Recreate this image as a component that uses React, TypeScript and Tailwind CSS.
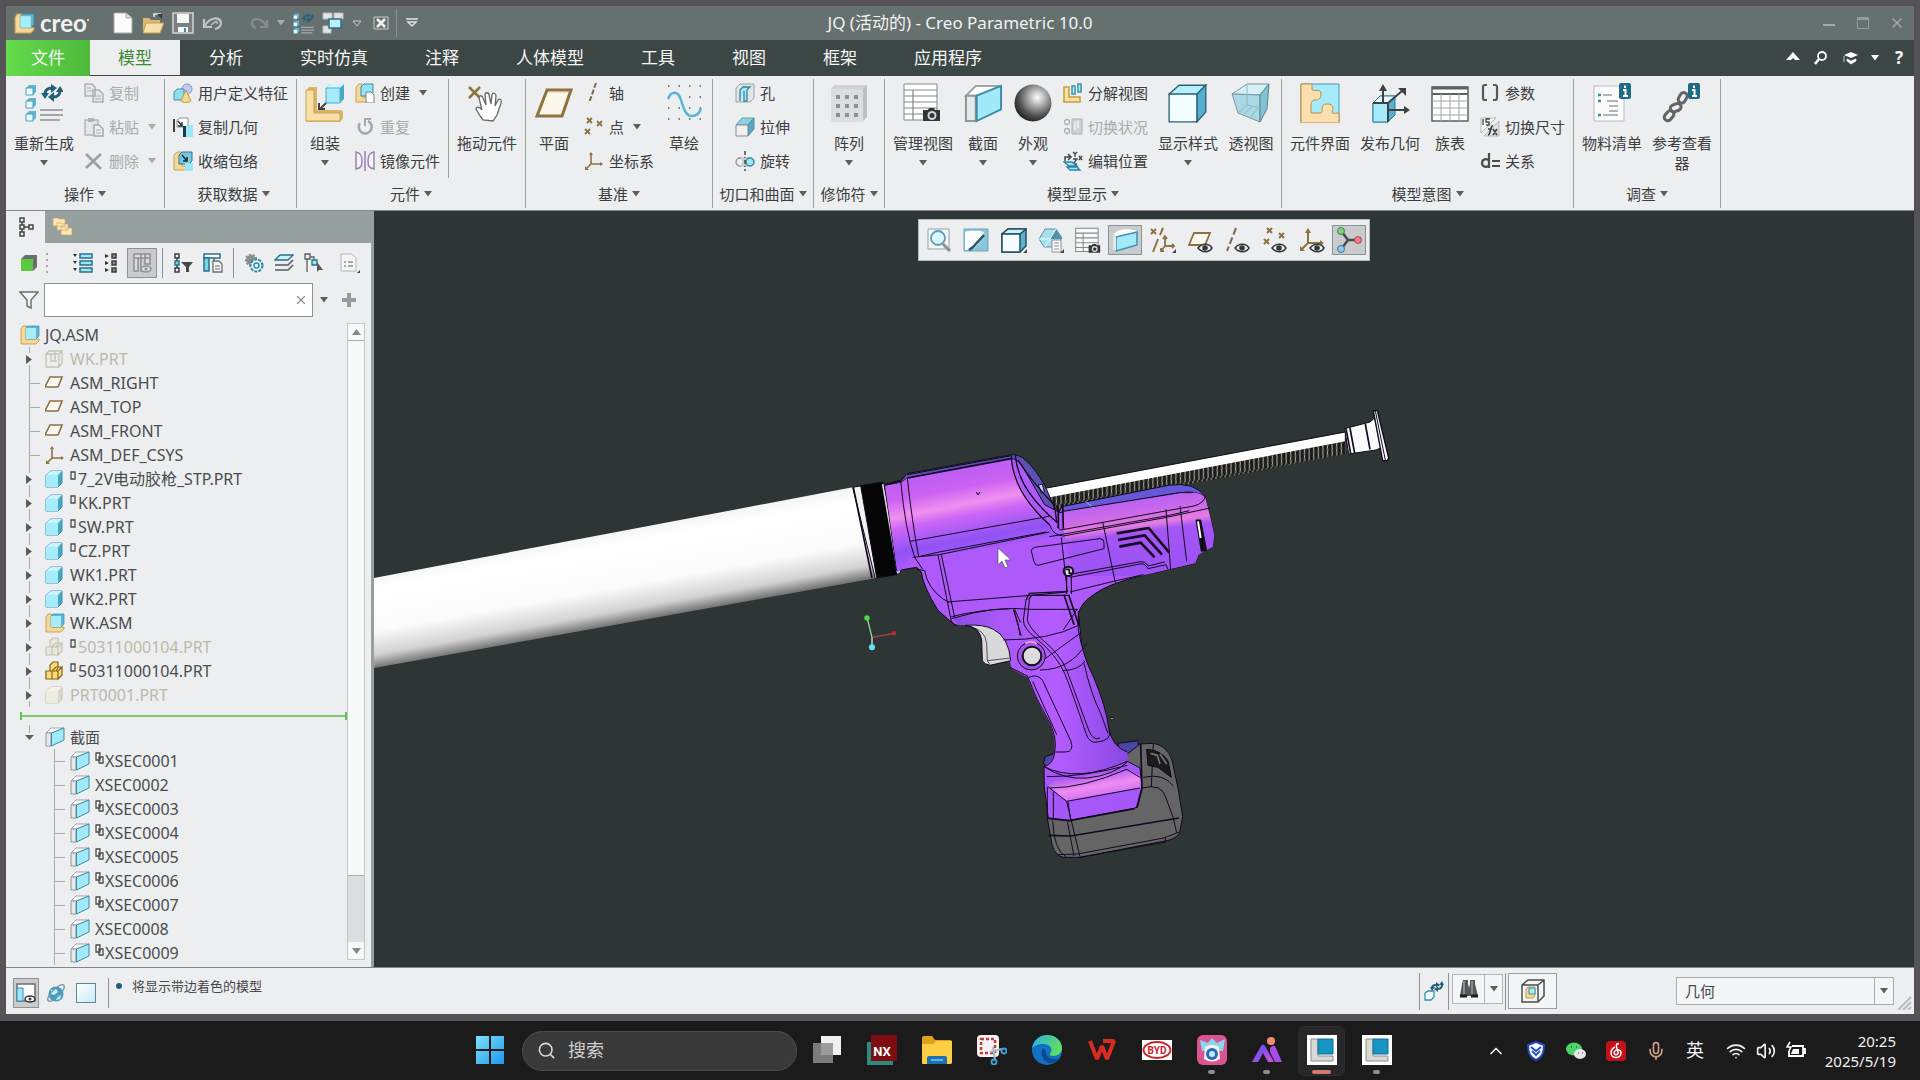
import React from 'react';
import { ChevronUp, Mic, Search, Volume2, Wifi, X } from 'lucide-react';

type IconProps = { size?: number; box?: number; children: React.ReactNode };

const Icon = ({ size = 20, box = 20, children }: IconProps) => (
  <svg width={size} height={size} viewBox={`0 0 ${box} ${box}`} fill="none" className="shrink-0" aria-hidden="true">
    {children}
  </svg>
);

const Caret = ({ light = false }: { light?: boolean }) => (
  <svg width="8" height="6" viewBox="0 0 8 6" className={light ? 'shrink-0 fill-[#a9abac]' : 'shrink-0 fill-[#5b5d5e]'} aria-hidden="true">
    <path d="M0 0h8L4 5.5z" />
  </svg>
);

/* ---------- shared small drawings ---------- */

const AsmIcon = ({ size = 20 }: { size?: number }) => (
  <Icon size={size}>
    <path d="M1 4l2-3h4v13h12v2l-3 3H1z" fill="#f5d894" stroke="#c7a35b" />
    <path d="M6 3l2-2h11v10l-3 3H6z" fill="#5fb6d3" stroke="#3a8dab" strokeWidth=".7" />
    <path d="M6 3h10v11H6z" fill="#a9edfb" />
  </Icon>
);

const PartIcon = ({ ghost = false }: { ghost?: boolean }) => (
  <Icon>
    <path d="M1 6l5-4h11v12l-4 4H1z" fill={ghost ? '#dbd8cb' : '#4aa5c6'} stroke={ghost ? '#c9c5b4' : '#3f8fab'} />
    <path d="M1 6l5-4h11l-4 4z" fill={ghost ? '#f2f0e8' : '#c9f5fd'} />
    <path d="M1 6h12v12H1z" fill={ghost ? '#eeebdf' : '#a6edfc'} />
  </Icon>
);

const GhostFrameIcon = () => (
  <Icon>
    <path d="M1 5l3-3h13v12l-3 4H1zM1 5h13v13M14 5l3-3M6 6v6h6M10 3v8" stroke="#c6c2b2" strokeWidth="1.3" />
  </Icon>
);

const PlaneIcon = () => (
  <Icon>
    <path d="M5 4h12l-4 10H0z" fill="#faf7ee" stroke="#897245" strokeWidth="1.600" />
  </Icon>
);

const CsysIcon = () => (
  <Icon>
    <path d="M7 2v11h11M7 13l-5 5" stroke="#8d7340" strokeWidth="1.600" />
    <path d="M5 4l2-3 2 3zM16 11l3 2-3 2zM1 15v4h4z" fill="#8d7340" />
  </Icon>
);

const BlocksIcon = ({ ghost = false }: { ghost?: boolean }) => (
  <Icon>
    <g fill={ghost ? '#eae7dc' : '#fbdc7c'} stroke={ghost ? '#c6c2b2' : '#8a6212'} strokeWidth="1.200">
      <path d="M5 4l3-3h5v6l-2 3H5zM1 10h6v8H1zM7 10h6v8H7zM13 10l4-4v8l-4 4zM7 10l4-4h6" />
    </g>
  </Icon>
);

const SectionIcon = ({ size = 20 }: { size?: number }) => (
  <Icon size={size}>
    <path d="M1 6l5-5h13L7 6z" fill="#fff" stroke="#9fa5a8" />
    <path d="M1 6h5v13H1z" fill="#e6e8ea" stroke="#8f979b" />
    <path d="M6.500 6L19 1v12L6.500 19z" fill="#a2eafa" stroke="#3d8ba5" />
  </Icon>
);

const CubeIcon = ({ size = 36 }: { size?: number }) => (
  <Icon size={size} box={36}>
    <path d="M1 10l9-8h24l-8 8z" fill="#b5effb" stroke="#2a6076" strokeWidth="1.200" />
    <path d="M26 10l8-8v24l-8 9z" fill="#55b0cf" stroke="#2a6076" strokeWidth="1.200" />
    <path d="M1 10h25v25H1z" fill="#f4fdff" stroke="#2a6076" strokeWidth="1.200" />
  </Icon>
);

const RegenIcon = ({ size = 38 }: { size?: number }) => (
  <Icon size={size} box={38}>
    {[1, 14, 27].map((y) => (
      <g key={y}>
        <path d={`M1 ${y + 3}l3-3h7v7l-3 3H1z`} fill="#5db5d2" />
        <path d={`M1 ${y + 3}h7v7H1z`} fill="#eefbfe" stroke="#4ba0bd" />
      </g>
    ))}
    <path d="M15 26h23M15 31h23M15 36h20" stroke="#a4a7a8" strokeWidth="2" />
    <path d="M20 10c0-4 3-6 7-6M35 6c0 5-2 7-7 7" stroke="#226079" strokeWidth="3" />
    <path d="M26 0l6 4-6 5zM29 8l-6 5 6 5zM16 9h8l-4 6zM31 8l4-6 4 6z" fill="#226079" />
  </Icon>
);

const CameraGlyph = () => (
  <g>
    <path d="M20 27h5l1-2h5l1 2h5v11H20z" fill="#33373a" />
    <circle cx="29" cy="32.500" r="4.500" fill="#d4d6d8" />
    <circle cx="29" cy="32.500" r="2.500" fill="#33373a" />
  </g>
);

const SheetIcon = ({ size = 40 }: { size?: number }) => (
  <Icon size={size} box={40}>
    <path d="M1 1h33v36H1z" fill="#fff" stroke="#83888b" />
    <path d="M1 7h33M1 13h33M1 19h33M1 25h33M1 31h33M10 7v30" stroke="#83888b" strokeWidth="1.200" />
    <CameraGlyph />
  </Icon>
);

const InfoBadge = ({ x }: { x: number }) => (
  <g>
    <rect x={x} y="0" width="12" height="16" rx="2" fill="#1f6a86" />
    <path d={`M${x + 6} 2.500v2.500M${x + 4} 7h2.500v5.500M${x + 4} 13h5`} stroke="#fff" strokeWidth="2" />
  </g>
);

/* ---------- ribbon ---------- */

type SmallProps = { icon: React.ReactNode; label: string; disabled?: boolean; caret?: boolean };

const SmallButton = ({ icon, label, disabled = false, caret = false }: SmallProps) => (
  <button
    type="button"
    disabled={disabled}
    className={`flex h-[34px] items-center gap-[5px] whitespace-nowrap ${disabled ? 'text-[#a9abac]' : 'text-[#3b3d3e]'}`}
  >
    {icon}
    <span>{label}</span>
    {caret && (
      <span className="ml-1">
        <Caret light={disabled} />
      </span>
    )}
  </button>
);

type BigProps = { icon: React.ReactNode; label: string; width: string; caret?: boolean };

const BigButton = ({ icon, label, width, caret = false }: BigProps) => (
  <button type="button" className={`flex shrink-0 flex-col items-center text-[#3b3d3e] ${width}`}>
    <span className="flex h-12 items-center justify-center">{icon}</span>
    <span className="mt-[6px] px-px leading-5">{label}</span>
    {caret && (
      <span className="mt-[2px] flex h-4 items-center">
        <Caret />
      </span>
    )}
  </button>
);

const Column = ({ children }: { children: React.ReactNode }) => <div className="-mt-[3px] flex flex-col px-[2px]">{children}</div>;

const Group = ({ label, width, children }: { label: string; width: string; children: React.ReactNode }) => (
  <section aria-label={label} className={`flex shrink-0 flex-col border-r border-[#9aa3a4] ${width}`}>
    <div className="flex h-[102px]">{children}</div>
    <button type="button" className="flex h-7 items-center justify-center gap-1 whitespace-nowrap text-[#3b3d3e]">
      {label}
      <Caret />
    </button>
  </section>
);

const Ribbon = () => (
  <div className="flex h-[135px] shrink-0 overflow-hidden border-b border-[#7e8a8a] bg-[#eceef0] pt-[3px] pb-[2px] text-[15px]">
    <Group label="操作" width="w-[159px]">
      <BigButton label="重新生成" width="w-[76px]" caret icon={<RegenIcon />} />
      <Column>
        <SmallButton
          disabled
          label="复制"
          icon={
            <Icon>
              <path d="M1 1h7l3 3v9H1zM9 7h6l4 4v8H9z" fill="#e6e7e8" stroke="#adb0b1" strokeWidth="1.500" />
              <path d="M3 5h4M3 8h5M11 13h6M11 16h6" stroke="#adb0b1" />
            </Icon>
          }
        />
        <SmallButton
          disabled
          caret
          label="粘贴"
          icon={
            <Icon>
              <path d="M1 3h13v15H1z" fill="#e6e7e8" stroke="#b3b6b7" strokeWidth="1.500" />
              <path d="M4 1h6v4H4z" fill="#b3b6b7" />
              <path d="M10 8h5l4 4v7h-9z" fill="#eff0f1" stroke="#a5a8a9" strokeWidth="1.500" />
              <path d="M12 13h5M12 16h5" stroke="#a5a8a9" />
            </Icon>
          }
        />
        <SmallButton
          disabled
          caret
          label="删除"
          icon={
            <Icon>
              <path d="M2 3l15 15M17 3L2 17" stroke="#9c9fa0" strokeWidth="2.500" />
            </Icon>
          }
        />
      </Column>
    </Group>

    <Group label="获取数据" width="w-[132px] pl-[6px]">
      <Column>
        <SmallButton
          label="用户定义特征"
          icon={
            <Icon>
              <circle cx="14" cy="6" r="5" fill="#c3c9ec" stroke="#8a93c4" />
              <path d="M1 9l3-3h7v8l-3 3H1z" fill="#93dcef" stroke="#4293b2" />
              <path d="M13 7l5 11c-2 2-8 2-10 0z" fill="#f6d793" stroke="#c29b4a" />
            </Icon>
          }
        />
        <SmallButton
          label="复制几何"
          icon={
            <Icon>
              <path d="M1 2v13" stroke="#3a4043" strokeWidth="2" />
              <path d="M4 3l3-2h8v7l-3 2H4z" fill="#fff" stroke="#8c9194" />
              <path d="M5 4l4 5M9 5v4H5" stroke="#333" strokeWidth="1.500" />
              <path d="M10 9h3v11h-3z" fill="#173b4b" />
              <path d="M13 8h7v12h-7z" fill="#9be7f8" />
            </Icon>
          }
        />
        <SmallButton
          label="收缩包络"
          icon={
            <Icon>
              <path d="M1 4l3-3h5v14h8v1l-3 3H1z" fill="#f5d894" stroke="#c7a35b" />
              <path d="M6 4l3-3h10v9l-3 3H6z" fill="#7cc7de" stroke="#2c7390" />
              <path d="M9 4l5 6M14 6v4h-4" stroke="#12303d" strokeWidth="1.500" />
              <path d="M12 12h8v8h-8z" fill="#9be7f8" />
            </Icon>
          }
        />
      </Column>
    </Group>

    <Group label="元件" width="w-[229px]">
      <BigButton
        label="组装"
        width="w-[56px]"
        caret
        icon={
          <Icon size={40} box={40}>
            <path d="M1 7l3-3h8v23h23l3 1v7l-3 4H1z" fill="#d9b565" />
            <path d="M1 7h8v23h26v8H1z" fill="#fae0a8" stroke="#c7a35b" />
            <path d="M21 5l4-4h14v15l-4 4H21z" fill="#4aa6c6" />
            <path d="M21 5l4-4h14l-4 4z" fill="#d2f6fd" />
            <path d="M21 5h14v15H21z" fill="#a4ebfb" stroke="#52aac6" />
            <path d="M21 20l-6 6M14 20v6h6" stroke="#444" strokeWidth="2" />
          </Icon>
        }
      />
      <Column>
        <SmallButton
          caret
          label="创建"
          icon={
            <Icon>
              <path d="M1 4l3-3h3v13h11v2l-3 3H1z" fill="#f5d894" stroke="#c7a35b" />
              <path d="M6 4l3-3h9v9l-3 3H6z" fill="#97e2f4" stroke="#3a8dab" />
              <path d="M11 9h5l3 3v8h-8z" fill="#fff" stroke="#7b8082" />
            </Icon>
          }
        />
        <SmallButton
          disabled
          label="重复"
          icon={
            <Icon>
              <path d="M5 6a6.500 6.500 0 1 0 8-2" stroke="#a5a8a9" strokeWidth="2.500" />
              <path d="M10 9V2h6" stroke="#a5a8a9" strokeWidth="2" />
            </Icon>
          }
        />
        <SmallButton
          label="镜像元件"
          icon={
            <Icon>
              <path d="M10 0v20" stroke="#a678b8" strokeWidth="1.500" />
              <path d="M1 1c5 1 6 4 6 9s-1 7-6 8z" fill="#f7f1fa" stroke="#9a86a8" strokeWidth="1.500" />
              <path d="M19 1c-5 1-6 4-6 9s1 7 6 8z" fill="#f7f1fa" stroke="#9a86a8" strokeWidth="1.500" />
            </Icon>
          }
        />
      </Column>
      <div className="ml-[6px] h-[99px] border-l border-[#9aa3a4]" />
      <BigButton
        label="拖动元件"
        width="w-[76px]"
        icon={
          <Icon size={38} box={38}>
            <path d="M1 3l11 11M12 3L1 14" stroke="#8d7340" strokeWidth="2.500" />
            <path
              d="M15 36c-3-4-6-9-7-11 0-3 4-2 6 1l-3-12c0-3 3-3 4 0l3 7-1-10c0-3 4-3 4 0l2 9 1-9c1-3 4-2 4 1l-1 10 3-6c2-2 4 0 3 3l-4 12-4 6z"
              fill="#fff"
              stroke="#66696b"
              strokeWidth="1.300"
            />
          </Icon>
        }
      />
    </Group>

    <Group label="基准" width="w-[187px]">
      <BigButton
        label="平面"
        width="w-[56px]"
        icon={
          <Icon size={38} box={38}>
            <path d="M12 6h24l-9 26H2z" fill="#faf6ea" stroke="#8d7340" strokeWidth="3" />
            <path d="M13 8h20" stroke="#d6c391" />
          </Icon>
        }
      />
      <Column>
        <SmallButton
          label="轴"
          icon={
            <Icon>
              <path d="M12 0L5 20" stroke="#776946" strokeWidth="2" strokeDasharray="5 2" />
            </Icon>
          }
        />
        <SmallButton
          caret
          label="点"
          icon={
            <Icon>
              <path d="M3 1l5 5M8 1L3 6M13 4l5 5M18 4l-5 5M1 12l5 5M6 12l-5 5" stroke="#8d7340" strokeWidth="1.800" />
            </Icon>
          }
        />
        <SmallButton label="坐标系" icon={<CsysIcon />} />
      </Column>
      <BigButton
        label="草绘"
        width="w-[56px]"
        icon={
          <Icon size={36} box={36}>
            {[2, 13, 24, 35].map((y) => (
              <path key={y} d={`M2 ${y - 1}h34`} stroke="#5a5d5f" strokeWidth="1.500" strokeDasharray="1.500 9" />
            ))}
            <path d="M2 14c3-8 10-9 13 1s5 16 11 16 8-4 9-8" stroke="#55b5d3" strokeWidth="2.500" />
          </Icon>
        }
      />
    </Group>

    <Group label="切口和曲面" width="w-[101px]">
      <div className="pl-5">
        <Column>
          <SmallButton
            label="孔"
            icon={
              <Icon>
                <path d="M1 5l4-4h14v14l-4 4H1z" fill="#e3e5e7" stroke="#9da2a5" />
                <path d="M5 18V7l3-3h7l-3 3v11H9V8" fill="#a6ebfa" stroke="#2b86a5" strokeWidth="1.300" />
              </Icon>
            }
          />
          <SmallButton
            label="拉伸"
            icon={
              <Icon>
                <path d="M1 8l6-7h12l-6 7z" fill="#8fd0e2" stroke="#6b9cac" />
                <path d="M13 8l6-7v11l-6 7z" fill="#5baac3" stroke="#4a8ba1" />
                <path d="M1 8h12v11H1z" fill="#eef0f1" stroke="#868d90" />
              </Icon>
            }
          />
          <SmallButton
            label="旋转"
            icon={
              <Icon>
                <circle cx="5" cy="11" r="4" fill="#eef0f1" stroke="#8d9396" strokeWidth="1.300" />
                <path d="M5 7c4-1 7-1 10 0v8c-3 1-6 1-10 0 3-2 3-6 0-8z" fill="#c9cdd0" />
                <circle cx="15" cy="11" r="4" fill="#9fe6f7" stroke="#2b86a5" strokeWidth="1.500" />
                <path d="M10 0v20" stroke="#333" strokeWidth="1.300" strokeDasharray="4 2 1 2" />
              </Icon>
            }
          />
        </Column>
      </div>
    </Group>

    <Group label="修饰符" width="w-[71px]">
      <BigButton
        label="阵列"
        width="w-[70px]"
        caret
        icon={
          <Icon size={38} box={38}>
            <path d="M1 5l4-4h32v32l-4 4H1z" fill="#bcbec0" />
            <path d="M1 5l4-4h32l-4 4z" fill="#cfd1d2" />
            <path d="M1 5h32v33H1z" fill="#dcdddf" />
            {[11, 20, 29].map((y) => (
              <g key={y} fill="#8d9092">
                <rect x="6" y={y} width="4" height="4" />
                <rect x="15" y={y} width="4" height="4" />
                <rect x="24" y={y} width="4" height="4" />
              </g>
            ))}
          </Icon>
        }
      />
    </Group>

    <Group label="模型显示" width="w-[397px]">
      <BigButton label="管理视图" width="w-[76px]" caret icon={<SheetIcon />} />
      <BigButton label="截面" width="w-[44px]" caret icon={<SectionIcon size={39} />} />
      <BigButton
        label="外观"
        width="w-[56px]"
        caret
        icon={
          <Icon size={38} box={38}>
            <defs>
              <radialGradient id="ball" cx=".62" cy=".35" r=".7">
                <stop offset="0" stopColor="#fff" />
                <stop offset=".35" stopColor="#a9a9a9" />
                <stop offset=".7" stopColor="#545454" />
                <stop offset="1" stopColor="#1f1f1f" />
              </radialGradient>
            </defs>
            <circle cx="19" cy="19" r="18.500" fill="url(#ball)" />
          </Icon>
        }
      />
      <Column>
        <SmallButton
          label="分解视图"
          icon={
            <Icon>
              <path d="M1 4h5v10h11v5H1z" fill="#fae0a8" stroke="#c99b3c" strokeWidth="1.500" />
              <path d="M9 3h3v8H9zM15 1h3v8h-3z" fill="#b8effb" stroke="#3d93b0" strokeWidth="1.500" />
            </Icon>
          }
        />
        <SmallButton
          disabled
          label="切换状况"
          icon={
            <Icon>
              <circle cx="4" cy="5" r="2.500" stroke="#adb0b1" strokeWidth="1.300" />
              <circle cx="4" cy="14" r="2.500" stroke="#adb0b1" strokeWidth="1.300" />
              <path d="M9 2h10v15H9z" fill="#d0d2d3" stroke="#adb0b1" />
              <path d="M12 5v8M15 4v7" stroke="#f4f4f4" strokeWidth="1.500" />
            </Icon>
          }
        />
        <SmallButton
          label="编辑位置"
          icon={
            <Icon>
              <path d="M2 10V6h5M5 3l3 3-3 3" stroke="#444" strokeWidth="1.500" />
              <path d="M10 1l2 2 2-2M12 3v3M16 5l3 4M19 5l-3 4M10 8h4l-4 5h4" stroke="#444" strokeWidth="1.300" />
              <path d="M1 11h8l5 4H6zM4 16h10l3 3H7z" fill="#9fe6f7" stroke="#2b86a5" strokeWidth="1.300" />
            </Icon>
          }
        />
      </Column>
      <BigButton label="显示样式" width="w-[76px]" caret icon={<CubeIcon size={40} />} />
      <BigButton
        label="透视图"
        width="w-[50px]"
        icon={
          <Icon size={40} box={40}>
            <path d="M1 11L16 1h22L29 12z" fill="#d5f1f7" stroke="#7d979f" />
            <path d="M1 11l28 1v27L7 30z" fill="#a8d9e5" stroke="#7d979f" />
            <path d="M29 12l9-11-2 25-7 13z" fill="#7fc4d6" stroke="#5d818b" />
            <path d="M16 1v21l20 4M16 22L7 30M12 32l10-9M19 35l8-10" stroke="#8fb5bf" />
          </Icon>
        }
      />
    </Group>

    <Group label="模型意图" width="w-[292px]">
      <BigButton
        label="元件界面"
        width="w-[76px]"
        icon={
          <Icon size={40} box={40}>
            <path d="M1 1h38v38H1z" fill="#a6ebfa" stroke="#4c9bb5" />
            <path
              d="M1 1h11v5c0 4 9-2 9 5 0 6-4 6-7 6-3 1-3 4-3 6v7h10c3-1-2-9 6-9s6 5 5 8c0 2 4 1 7 1v10H1z"
              fill="#fbdfae"
              stroke="#b98f45"
            />
          </Icon>
        }
      />
      <BigButton
        label="发布几何"
        width="w-[64px]"
        icon={
          <Icon size={40} box={40}>
            <path d="M3 20l7-7h15v19l-7 7H3z" fill="#57b1cf" stroke="#2b7f9c" />
            <path d="M3 20h15v19H3z" fill="#a6ebfa" stroke="#2b7f9c" />
            <path d="M3 20l7-7h15l-7 7z" fill="#e6fafe" stroke="#2b7f9c" />
            <path d="M3 20h15M13 20V5M18 27h18M18 20L32 8M18 20v19" stroke="#3e4244" strokeWidth="2" />
            <path d="M9 8l4-7 4 7zM34 23l6 4-6 4zM28 5h8v8z" fill="#3e4244" />
          </Icon>
        }
      />
      <BigButton
        label="族表"
        width="w-[56px]"
        icon={
          <Icon size={38} box={38}>
            <path d="M1 3h36v34H1z" fill="#fff" stroke="#5e6264" strokeWidth="1.500" />
            <path d="M1 4h36" stroke="#5e6264" strokeWidth="3" />
            <path d="M1 10h36" stroke="#5e6264" strokeWidth="2" />
            <path d="M1 17h36M1 24h36M1 31h36M10 10v27M19 10v27M28 10v27" stroke="#a2a5a7" />
          </Icon>
        }
      />
      <Column>
        <SmallButton
          label="参数"
          icon={
            <Icon>
              <path d="M7 2H5Q3 2 3 4v11q0 2 2 2h2M13 2h2q2 0 2 2v11q0 2-2 2h-2" stroke="#55585a" strokeWidth="2.200" />
            </Icon>
          }
        />
        <SmallButton
          label="切换尺寸"
          icon={
            <Icon>
              <path d="M1 1h15L1 16z" fill="#fafafa" stroke="#b5b8ba" />
              <path d="M19 4v15H4z" fill="#dfe1e2" stroke="#b5b8ba" />
              <path d="M3 2v6M10 2H6v3h3v3H6" stroke="#3e4244" strokeWidth="1.300" />
              <path d="M13 9c-3-1-2 9-5 9M8 12h4M13 12l4 6M17 12l-4 6" stroke="#3e4244" strokeWidth="1.600" />
            </Icon>
          }
        />
        <SmallButton
          label="关系"
          icon={
            <Icon>
              <path d="M9 2v15M9 10c-2-3-7-2-7 2s5 5 7 2M12 10h8M12 15h8" stroke="#4a4d4f" strokeWidth="2.200" />
            </Icon>
          }
        />
      </Column>
    </Group>

    <Group label="调查" width="w-[147px]">
      <BigButton
        label="物料清单"
        width="w-[76px]"
        icon={
          <Icon size={40} box={40}>
            <path d="M2 3h24l6 6v29H2z" fill="#fbfbfc" stroke="#b6babc" />
            <path d="M11 12h9M15 18h11M17 23h9M17 28h9M11 32h15" stroke="#9b9fa1" strokeWidth="1.500" />
            <path d="M6 12h3M6 18h3M6 32h3" stroke="#2d9a8a" strokeWidth="2.500" />
            <InfoBadge x={27} />
          </Icon>
        }
      />
      <BigButton
        label="参考查看器"
        width="w-[64px]"
        icon={
          <Icon size={40} box={40}>
            <g stroke="#626568" strokeWidth="3">
              <rect x="1" y="29" width="11" height="7" rx="3.500" transform="rotate(-50 7 32)" />
              <rect x="8" y="21" width="11" height="7" rx="3.500" transform="rotate(-20 14 24)" />
              <rect x="15" y="12" width="11" height="7" rx="3.500" transform="rotate(-60 20 15)" />
            </g>
            <InfoBadge x={26} />
          </Icon>
        }
      />
    </Group>
  </div>
);

/* ---------- title bar and tabs ---------- */

const QuickButton = ({ label, children, width = 'w-[30px]' }: { label: string; children: React.ReactNode; width?: string }) => (
  <button type="button" aria-label={label} className={`flex h-full shrink-0 items-center justify-center ${width}`}>
    {children}
  </button>
);

const TitleBar = () => (
  <header className="grid h-[34px] shrink-0 grid-cols-[1fr_auto_1fr] items-center bg-[#66706e] text-[#f1f3f3]">
    <div className="flex h-full items-center pl-2">
      <AsmIcon size={21} />
      <span className="ml-[5px] flex w-[68px] font-['Lato','Open_Sans',sans-serif] text-[24px] leading-6 font-bold">
        creo
        <span className="mt-2 h-[2px] w-[2px] rounded-full bg-[#f1f3f3]" />
      </span>
      <QuickButton label="新建">
        <Icon size={22} box={22}>
          <path d="M2 1h12l6 5v15H2z" fill="#fcfcfc" stroke="#a9adad" />
          <path d="M14 1v5h6" fill="#d6d8d8" stroke="#a9adad" />
        </Icon>
      </QuickButton>
      <QuickButton label="打开">
        <Icon size={22} box={22}>
          <path d="M1 20V6h6l2 2h9v12z" fill="#d9b972" />
          <path d="M4 11h18l-4 10H1z" fill="#f8dfa9" stroke="#c39d53" />
          <path d="M12 5V2h7" stroke="#e9ebeb" strokeWidth="1.500" />
          <path d="M15 2h5v5z" fill="#33383a" />
        </Icon>
      </QuickButton>
      <QuickButton label="保存">
        <Icon size={22} box={22}>
          <path d="M1 1h20v20H1z" fill="#7b8080" stroke="#d2d5d5" strokeWidth="1.500" />
          <path d="M5 2h12v9H5z" fill="#f5f6f6" />
          <path d="M6 15h10v5H6z" fill="#f5f6f6" />
          <path d="M12 16h2v4h-2z" fill="#3a8dab" />
        </Icon>
      </QuickButton>
      <QuickButton label="撤消">
        <Icon size={22} box={22}>
          <path d="M2 7v8h8M3 14C7 5 19 4 19 11c0 3-2 5-6 6" stroke="#c0c6c5" strokeWidth="2.200" />
          <path d="M9 13l4-3c2-1 3 0 2 2" stroke="#c0c6c5" strokeWidth="1.500" />
        </Icon>
      </QuickButton>
      <span className="w-[16px]" />
      <QuickButton label="重做">
        <Icon size={20} box={20}>
          <path d="M18 7v7h-7M17 13C14 5 3 4 3 10c0 3 1 4 4 5" stroke="#868e8c" strokeWidth="2.200" />
        </Icon>
      </QuickButton>
      <QuickButton label="重做列表" width="w-[14px]">
        <svg width="8" height="6" viewBox="0 0 8 6" className="fill-[#a7adac]"><path d="M0 0h8L4 5.500z" /></svg>
      </QuickButton>
      <QuickButton label="重新生成">
        <RegenIcon size={21} />
      </QuickButton>
      <QuickButton label="窗口">
        <Icon size={22} box={22}>
          <path d="M1 1h9v6H1zM12 1h9v6h-9zM1 14h8v7H1z" fill="#dfe3e3" stroke="#b8bebd" />
          <path d="M7 7h12v9H7z" fill="#bceffa" stroke="#2f6f86" strokeWidth="1.500" />
        </Icon>
      </QuickButton>
      <QuickButton label="窗口列表" width="w-[18px]">
        <svg width="10" height="7" viewBox="0 0 10 7" fill="none" stroke="#c8cdcc"><path d="M1 1h8L5 6z" /></svg>
      </QuickButton>
      <QuickButton label="关闭窗口">
        <Icon size={16} box={16}>
          <path d="M1 2h14v12H1z" stroke="#c8cdcc" />
          <path d="M4 4l8 8M12 4l-8 8" stroke="#f1f3f3" strokeWidth="2.500" />
        </Icon>
      </QuickButton>
      <span className="h-7 border-l border-[#8b9391]" />
      <QuickButton label="自定义">
        <svg width="12" height="10" viewBox="0 0 12 10" fill="none" stroke="#dfe3e2" strokeWidth="1.500"><path d="M0 1h12M2 4h8L6 8z" /></svg>
      </QuickButton>
    </div>
    <h1 className="text-[17px] whitespace-nowrap">JQ (活动的) - Creo Parametric 10.0</h1>
    <div className="flex h-full items-center justify-end">
      <QuickButton label="最小化" width="w-[34px]">
        <span className="mt-1 h-[2px] w-3 bg-[#a3aaa8]" />
      </QuickButton>
      <QuickButton label="最大化" width="w-[34px]">
        <span className="h-3 w-3 border border-t-[3px] border-[#949c9a]" />
      </QuickButton>
      <QuickButton label="关闭" width="w-[34px]">
        <X size={16} color="#a3aaa8" strokeWidth={2.500} />
      </QuickButton>
    </div>
  </header>
);

const tabs = ['分析', '实时仿真', '注释', '人体模型', '工具', '视图', '框架', '应用程序'];

const Tabs = () => (
  <nav className="flex h-9 shrink-0 items-stretch bg-[#3c4645] text-[17px] text-[#f5f7f7]">
    <button type="button" className="bg-gradient-to-r from-[#64dc4c] to-[#4fb83b] px-[25px]">文件</button>
    <button type="button" className="mr-px border-b border-[#3c4645] bg-[#eceef0] px-7 text-[#3f8a34]">模型</button>
    {tabs.map((tab) => (
      <button key={tab} type="button" className="mr-px px-7">{tab}</button>
    ))}
    <div className="ml-auto flex items-center">
      <QuickButton label="折叠功能区" width="w-[26px]">
        <svg width="14" height="9" viewBox="0 0 14 9" fill="#fff" className="mb-1"><path d="M0 8l7-8 7 8H9L7 6 5 8z" /></svg>
      </QuickButton>
      <QuickButton label="搜索">
        <Icon size={14} box={14}>
          <circle cx="8" cy="5" r="4" stroke="#fff" strokeWidth="1.800" />
          <path d="M5 8l-4 5" stroke="#fff" strokeWidth="2.500" />
        </Icon>
      </QuickButton>
      <QuickButton label="学习">
        <Icon size={16} box={16}>
          <path d="M8 2l7 3-7 3-7-3z" fill="#fff" />
          <path d="M1 6v6M4 9l4 2 5-2v2l-5 3-4-3z" fill="#fff" stroke="#fff" strokeWidth=".7" />
        </Icon>
      </QuickButton>
      <QuickButton label="学习列表" width="w-[18px]">
        <svg width="8" height="6" viewBox="0 0 8 6" fill="#fff"><path d="M0 0h8L4 5.500z" /></svg>
      </QuickButton>
      <QuickButton label="帮助">
        <span className="text-[17px] font-bold">?</span>
      </QuickButton>
    </div>
  </nav>
);

/* ---------- model tree ---------- */

type Mark = 'flex' | 'link';
type Node = { name: string; icon: React.ReactNode; leaf?: boolean; ghost?: boolean; mark?: Mark };

const nodes: Node[] = [
  { name: 'WK.PRT', icon: <GhostFrameIcon />, ghost: true },
  { name: 'ASM_RIGHT', icon: <PlaneIcon />, leaf: true },
  { name: 'ASM_TOP', icon: <PlaneIcon />, leaf: true },
  { name: 'ASM_FRONT', icon: <PlaneIcon />, leaf: true },
  { name: 'ASM_DEF_CSYS', icon: <CsysIcon />, leaf: true },
  { name: '7_2V电动胶枪_STP.PRT', icon: <PartIcon />, mark: 'flex' },
  { name: 'KK.PRT', icon: <PartIcon />, mark: 'flex' },
  { name: 'SW.PRT', icon: <PartIcon />, mark: 'flex' },
  { name: 'CZ.PRT', icon: <PartIcon />, mark: 'flex' },
  { name: 'WK1.PRT', icon: <PartIcon /> },
  { name: 'WK2.PRT', icon: <PartIcon /> },
  { name: 'WK.ASM', icon: <AsmIcon /> },
  { name: '50311000104.PRT', icon: <BlocksIcon ghost />, ghost: true, mark: 'flex' },
  { name: '50311000104.PRT', icon: <BlocksIcon />, mark: 'flex' },
  { name: 'PRT0001.PRT', icon: <PartIcon ghost />, ghost: true },
];

const sections = [1, 2, 3, 4, 5, 6, 7, 8, 9].map((n) => ({
  name: `XSEC000${n}`,
  mark: n === 2 || n === 8 ? undefined : ('link' as Mark),
}));

const NodeMark = ({ mark }: { mark?: Mark }) => {
  if (mark === 'flex') {
    return (
      <svg width="8" height="20" viewBox="0 0 8 20" fill="none" stroke="#4a4d4f" strokeWidth="1.300" aria-hidden="true">
        <path d="M1 3h4v7H1z" />
      </svg>
    );
  }
  if (mark === 'link') {
    return (
      <svg width="10" height="20" viewBox="0 0 10 20" fill="none" stroke="#4a4d4f" strokeWidth="1.300" aria-hidden="true">
        <path d="M1 2h4v7H1zM4 6h4v6H4z" />
      </svg>
    );
  }
  return null;
};

const Guide = ({ kind }: { kind: 'leaf' | 'closed' | 'open' }) => (
  <svg width="25" height="24" viewBox="0 0 25 24" className="shrink-0" aria-hidden="true">
    {kind === 'leaf' && <path d="M9.500 0v24M9.500 12.500H20" stroke="#a9acae" fill="none" />}
    {kind === 'closed' && (
      <>
        <path d="M9.500 0v6M9.500 18v6" stroke="#a9acae" fill="none" />
        <path d="M6 8l6 4.500-6 4.500z" fill="#5b5d5e" />
      </>
    )}
    {kind === 'open' && (
      <>
        <path d="M9.500 0v8" stroke="#a9acae" fill="none" />
        <path d="M5 10h9l-4.500 5z" fill="#5b5d5e" />
      </>
    )}
  </svg>
);

const ToolButton = ({ label, width = 'w-[30px]', pressed = false, children }: { label: string; width?: string; pressed?: boolean; children: React.ReactNode }) => (
  <button
    type="button"
    aria-label={label}
    className={`flex shrink-0 items-center justify-center ${width} ${pressed ? 'border border-[#8d9294] bg-[#c9cbcc]' : ''} h-[30px]`}
  >
    {children}
  </button>
);

const TreeToolbar = () => (
  <div className="flex h-10 shrink-0 items-center pl-2">
    <ToolButton label="模型显示">
      <Icon>
        <path d="M2 6l4-4h12v12l-4 4H2z" fill="#6b6f70" />
        <path d="M2 6h12v12H2z" fill="#5cc943" />
      </Icon>
    </ToolButton>
    <span className="ml-[2px] flex w-[22px] flex-col gap-1">
      {[0, 1, 2, 3].map((i) => (
        <span key={i} className="h-[2px] w-[2px] bg-[#a3a7a9]" />
      ))}
    </span>
    <ToolButton label="全部展开">
      <Icon>
        <path d="M7 1h12v4H7zM7 8h12v4H7zM7 15h12v4H7z" fill="#9fe6f7" stroke="#2a718b" strokeWidth="1.500" />
        <path d="M0 1h4L2 4zM0 8h4l-2 3zM0 15h4l-2 3z" fill="#333" />
      </Icon>
    </ToolButton>
    <ToolButton label="全部折叠" width="w-[26px]">
      <Icon>
        <path d="M11 1h4v4h-4zM11 8h4v4h-4zM11 15h4v4h-4z" fill="#8b8f91" stroke="#3b3e40" strokeWidth="1.500" />
        <path d="M4 1l4 2-4 2zM4 8l4 2-4 2zM4 15l4 2-4 2z" fill="#333" />
      </Icon>
    </ToolButton>
    <span className="w-[3px]" />
    <ToolButton label="树列" pressed>
      <Icon>
        <path d="M2 1h16v4H2zM2 5v13h4V5M9 5v13h3M9 1v4M13 1v10h5V5" fill="#dcdddd" stroke="#8d9092" strokeWidth="1.500" />
        <ellipse cx="14" cy="16" rx="5" ry="3" fill="#dcdddd" stroke="#8d9092" strokeWidth="1.500" />
        <circle cx="14" cy="16" r="1.500" fill="#8d9092" />
      </Icon>
    </ToolButton>
    <span className="mx-[5px] h-[30px] border-l border-[#8d9294]" />
    <ToolButton label="树过滤器">
      <Icon>
        <path d="M2 1h4v4H2zM2 15h4v4H2zM4 5v10" stroke="#3b3e40" strokeWidth="1.500" />
        <path d="M2 8h4v4H2z" fill="#79d5ee" stroke="#2a718b" strokeWidth="1.500" />
        <path d="M8 9h12l-4 5v5h-3v-5z" fill="#44484a" />
      </Icon>
    </ToolButton>
    <ToolButton label="树列设置">
      <Icon>
        <path d="M1 1h16v4H1zM11 5v3" fill="#fff" stroke="#2a718b" strokeWidth="1.500" />
        <path d="M1 5h5v13H1z" fill="#79d5ee" stroke="#2a718b" strokeWidth="1.500" />
        <path d="M10 8h6l3 3v8h-9z" fill="#f4f5f5" stroke="#6b6f70" strokeWidth="1.300" />
        <path d="M12 13h5M12 16h5" stroke="#6b6f70" />
      </Icon>
    </ToolButton>
    <span className="mx-[5px] h-[30px] border-l border-[#8d9294]" />
    <ToolButton label="设置">
      <Icon>
        <circle cx="7" cy="7" r="5" fill="#8b8f91" stroke="#8b8f91" strokeWidth="2.500" strokeDasharray="2 1.500" />
        <circle cx="12.500" cy="12.500" r="6" fill="#e6f9fd" stroke="#2f87a6" strokeWidth="2" strokeDasharray="3 1.200" />
        <circle cx="12.500" cy="12.500" r="2.500" fill="#fff" stroke="#2f87a6" strokeWidth="1.500" />
      </Icon>
    </ToolButton>
    <ToolButton label="层树">
      <Icon>
        <path d="M6 2h13l-5 5H1z" fill="#c9f3fc" stroke="#2a718b" strokeWidth="1.300" />
        <path d="M1 12h13l5-5M1 17h13l5-5" stroke="#55595b" strokeWidth="1.500" />
      </Icon>
    </ToolButton>
    <ToolButton label="选择">
      <Icon>
        <path d="M1 1h5v5H1zM3 6v13M6 4h4v4" stroke="#5b5f61" strokeWidth="1.300" />
        <path d="M8 7h5v5H8z" fill="#9fe6f7" stroke="#2a718b" strokeWidth="1.300" />
        <path d="M13 9l6 8h-4l-2 2z" fill="#55595b" />
      </Icon>
    </ToolButton>
    <span className="w-[6px]" />
    <ToolButton label="报告">
      <Icon>
        <path d="M1 1h11l4 4v13H1z" fill="#f4f5f5" stroke="#b2b6b8" />
        <path d="M4 9h2M4 13h2M8 9h5M8 13h5" stroke="#8b8f91" strokeWidth="1.500" />
        <path d="M20 17v3h-3z" fill="#44484a" />
      </Icon>
    </ToolButton>
  </div>
);

const Sidebar = () => (
  <aside className="flex w-[368px] shrink-0 flex-col border-r-[3px] border-[#96a09f] bg-[#eceef0] text-[#4a4c4e]">
    <div className="flex h-8 shrink-0 bg-[#96a09f]">
      <button type="button" aria-label="模型树" className="flex w-[39px] items-center justify-center bg-[#eceef0]">
        <Icon>
          <path d="M4 1h4v4H4zM4 8h4v4H4zM4 15h4v4H4zM13 8h4v4h-4zM6 5v3M6 12v3M8 10h5" stroke="#44484a" strokeWidth="1.500" />
        </Icon>
      </button>
      <button type="button" aria-label="文件夹浏览器" className="flex w-9 items-center justify-center">
        <Icon>
          <g fill="#fbe6b4" stroke="#c7a35b" strokeWidth=".6">
            <path d="M0 1h5l1 1h6v7H0zM4 6h4l1 1h6v6H4zM8 10h4l1 1h6v7H8z" />
          </g>
        </Icon>
      </button>
    </div>
    <TreeToolbar />
    <div className="flex h-[34px] shrink-0 items-center pl-[13px]">
      <Icon>
        <path d="M1 2h18l-7 8v8l-4-2v-6z" fill="#f4f5f5" stroke="#6b6f70" strokeWidth="1.500" />
      </Icon>
      <div className="ml-[5px] flex h-[34px] w-[269px] items-center border border-[#8d9294] bg-white">
        <input type="text" aria-label="搜索模型树" className="h-full min-w-0 flex-1 px-2 text-[15px] outline-none" />
        <button type="button" aria-label="清除" className="px-1">
          <X size={14} color="#8b8f91" />
        </button>
      </div>
      <button type="button" aria-label="搜索选项" className="flex w-[22px] justify-center"><Caret /></button>
      <button type="button" aria-label="添加" className="flex w-7 justify-center">
        <Icon size={14} box={14}>
          <path d="M7 0v14M0 7h14" stroke="#97999b" strokeWidth="4" />
        </Icon>
      </button>
    </div>
    <div className="mt-[6px] flex min-h-0 flex-1 pl-[14px] text-[16px] leading-5">
      <div className="min-w-0 flex-1 overflow-hidden">
        <div className="flex h-6 items-center gap-[5px]">
          <AsmIcon />
          <span>JQ.ASM</span>
        </div>
        <ul>
          {nodes.map((node, i) => (
            <li key={i} className={`flex h-6 items-center ${node.ghost ? 'text-[#bdb9a8]' : ''}`}>
              <Guide kind={node.leaf ? 'leaf' : 'closed'} />
              <span className="mr-[5px]">{node.icon}</span>
              <NodeMark mark={node.mark} />
              <span className="whitespace-nowrap">{node.name}</span>
            </li>
          ))}
        </ul>
        <div className="flex h-[18px] items-center">
          <span className="h-2 w-[2px] bg-[#69bd5a]" />
          <span className="h-[2px] flex-1 bg-[#7cc66e]" />
          <span className="h-2 w-[2px] bg-[#69bd5a]" />
        </div>
        <div className="flex h-6 items-center">
          <Guide kind="open" />
          <SectionIcon />
          <span className="ml-[5px] text-[15px]">截面</span>
        </div>
        <ul className="pl-[25px]">
          {sections.map((section) => (
            <li key={section.name} className="flex h-6 items-center">
              <Guide kind="leaf" />
              <SectionIcon />
              <span className="w-[5px]" />
              <NodeMark mark={section.mark} />
              <span>{section.name}</span>
            </li>
          ))}
        </ul>
      </div>
      <div className="mr-[6px] mb-[7px] flex w-[18px] flex-col border border-[#c3c6c8] bg-[#dcdee0]">
        <button type="button" aria-label="向上滚动" className="flex h-[17px] shrink-0 items-center justify-center border-b border-[#a9acae] bg-[#f7f8f8]">
          <svg width="9" height="6" viewBox="0 0 9 6" fill="#85898b"><path d="M0 6h9L4.500 0z" /></svg>
        </button>
        <div className="flex-[534] border-b border-[#a9acae] bg-[#f7f8f8]" />
        <div className="flex-[66]" />
        <button type="button" aria-label="向下滚动" className="flex h-[17px] shrink-0 items-center justify-center bg-[#f7f8f8]">
          <svg width="9" height="6" viewBox="0 0 9 6" fill="#85898b"><path d="M0 0h9L4.500 6z" /></svg>
        </button>
      </div>
    </div>
  </aside>
);

/* ---------- viewport ---------- */

const EyeGlyph = () => (
  <g>
    <path d="M11 21c4-5 11-5 14 0-3 5-10 5-14 0z" fill="#f5f5f5" stroke="#33373a" strokeWidth="1.500" />
    <circle cx="18" cy="21" r="2.800" fill="#33373a" />
  </g>
);

const viewTools = [
  {
    label: '重新调整',
    icon: (
      <>
        <path d="M2 2h21v20H2z" fill="#f4f5f5" stroke="#9b9fa1" />
        <circle cx="12" cy="11" r="7" fill="#d9f7fd" stroke="#5b9fb7" strokeWidth="1.800" />
        <path d="M17 17l7 7" stroke="#8b8f91" strokeWidth="3" />
      </>
    ),
  },
  {
    label: '重画',
    icon: (
      <>
        <path d="M1 2h24v22H1z" fill="#89c6d8" stroke="#6fa3b3" />
        <path d="M2 5c7-2 14-1 19 0-2 9-8 16-13 17l-6 1z" fill="#fbfdfd" />
        <path d="M21 8L10 20l-4 3" stroke="#2a5566" strokeWidth="2.500" />
      </>
    ),
  },
  {
    label: '显示样式',
    corner: true,
    icon: (
      <>
        <path d="M1 7l6-5h18v17l-6 6H1z" fill="#5cb2cf" stroke="#234f61" strokeWidth="1.500" />
        <path d="M1 7l6-5h18l-6 5z" fill="#c9f3fc" stroke="#234f61" strokeWidth="1.500" />
        <path d="M1 7h18v18H1z" fill="#f6fdff" stroke="#234f61" strokeWidth="1.500" />
      </>
    ),
  },
  {
    label: '已保存方向',
    corner: true,
    icon: (
      <>
        <path d="M1 12l6-10h11l6 9-6 9H6z" fill="#a6dfee" stroke="#5c91a2" />
        <path d="M12 12l6-10 6 10z" fill="#4e93aa" />
        <path d="M1 12h11l6-10M12 12l-5 8" stroke="#e9fafd" />
        <path d="M14 13h9v12h-9z" fill="#fafafa" stroke="#8b8f91" />
        <path d="M16 16h5M16 19h5M16 22h5" stroke="#8b8f91" />
      </>
    ),
  },
  {
    label: '视图管理器',
    icon: (
      <g transform="scale(.68)">
        <path d="M1 2h33v34H1z" fill="#fafafa" stroke="#83888b" strokeWidth="1.500" />
        <path d="M1 9h33M1 16h33M1 23h33M1 30h33M12 9v27" stroke="#83888b" strokeWidth="1.500" />
        <CameraGlyph />
      </g>
    ),
  },
  {
    label: '截面',
    pressed: true,
    icon: (
      <>
        <path d="M2 7c3-5 16-6 23-3v3L6 11z" fill="#fff" />
        <path d="M4 10l21-5v13L4 24z" fill="#a2eafa" stroke="#3d93b0" strokeWidth="1.500" />
        <path d="M1 7l3 3v14l-3-2z" fill="#e6e8ea" />
      </>
    ),
  },
  {
    label: '基准显示过滤器',
    corner: true,
    icon: (
      <>
        <path d="M1 2l5 5M6 2L1 7M13 1l-3 7M8 12L3 25" stroke="#8d7340" strokeWidth="2" />
        <path d="M15 10v9h9M15 19l-4 5M13 12l2-3 2 3M22 17l2 2-2 2M11 21v3h3" stroke="#8d7340" strokeWidth="1.800" />
      </>
    ),
  },
  {
    label: '平面显示',
    icon: (
      <>
        <path d="M7 6h16l-5 12H2z" fill="#faf7ee" stroke="#897245" strokeWidth="1.800" />
        <EyeGlyph />
      </>
    ),
  },
  {
    label: '轴显示',
    icon: (
      <>
        <path d="M12 1L3 24" stroke="#776946" strokeWidth="2" strokeDasharray="7 3" />
        <EyeGlyph />
      </>
    ),
  },
  {
    label: '点显示',
    icon: (
      <>
        <path d="M6 1l5 5M11 1L6 6M18 6l5 5M23 6l-5 5M3 12l5 5M8 12l-5 5" stroke="#8d7340" strokeWidth="2" />
        <EyeGlyph />
      </>
    ),
  },
  {
    label: '坐标系显示',
    icon: (
      <>
        <path d="M9 2v14h14M9 16l-7 7" stroke="#8d7340" strokeWidth="2" />
        <path d="M6 6l3-5 3 5zM21 13l4 3-4 3zM1 19v5h5z" fill="#8d7340" />
        <EyeGlyph />
      </>
    ),
  },
  {
    label: '旋转中心',
    pressed: true,
    icon: (
      <>
        <path d="M6 5l6 8h9M12 13l-6 8" stroke="#4a4d4f" strokeWidth="2.500" />
        <circle cx="5" cy="4" r="3.500" fill="#7fd07c" stroke="#4a7d48" />
        <circle cx="22" cy="13" r="3.500" fill="#f08088" stroke="#a84850" />
        <circle cx="5" cy="22" r="3.500" fill="#8fcbe8" stroke="#3d7693" />
      </>
    ),
  },
];

const ViewToolbar = () => (
  <div className="relative mt-2 flex h-[42px] w-[452px] items-center justify-between border border-[#b5babb] bg-[#eceef0] px-[3px]">
    {viewTools.map((tool) => (
      <ToolButton key={tool.label} label={tool.label} width="w-[34px]" pressed={tool.pressed}>
        <Icon size={26} box={26}>
          {tool.icon}
          {tool.corner && <path d="M26 22v4h-4z" fill="#44484a" />}
        </Icon>
      </ToolButton>
    ))}
  </div>
);

const Gun = () => (
  <svg viewBox="374 211 1540 756" preserveAspectRatio="xMidYMid slice" className="absolute inset-0 h-full w-full" role="img" aria-label="JQ 装配模型">
    <defs>
      <linearGradient id="tube" gradientUnits="userSpaceOnUse" x1="0" y1="144" x2="50" y2="420">
        <stop offset="0" stopColor="#f4f4f4" />
        <stop offset=".15" stopColor="#ffffff" />
        <stop offset=".6" stopColor="#fbfbfb" />
        <stop offset=".85" stopColor="#d2d2d2" />
        <stop offset="1" stopColor="#6f6f6f" />
      </linearGradient>
      <linearGradient id="barrel" gradientUnits="userSpaceOnUse" x1="325" y1="75" x2="375" y2="335">
        <stop offset="0" stopColor="#b95df2" />
        <stop offset=".25" stopColor="#cb61f3" />
        <stop offset=".45" stopColor="#f090f0" />
        <stop offset=".58" stopColor="#cc66f6" />
        <stop offset=".85" stopColor="#9052f4" />
        <stop offset="1" stopColor="#a758fb" />
      </linearGradient>
      <linearGradient id="rear" gradientUnits="userSpaceOnUse" x1="820" y1="180" x2="850" y2="400">
        <stop offset="0" stopColor="#b661f4" />
        <stop offset=".22" stopColor="#cf6be8" />
        <stop offset=".36" stopColor="#e57ee0" />
        <stop offset=".46" stopColor="#a456f5" />
        <stop offset="1" stopColor="#9c52f4" />
      </linearGradient>
      <linearGradient id="grip" x1="0" y1="0" x2="1" y2="0">
        <stop offset="0" stopColor="#8b4de0" />
        <stop offset=".25" stopColor="#a957f8" />
        <stop offset=".6" stopColor="#b45cff" />
        <stop offset="1" stopColor="#8748e2" />
      </linearGradient>
      <linearGradient id="base" gradientUnits="userSpaceOnUse" x1="440" y1="520" x2="455" y2="605">
        <stop offset="0" stopColor="#a858ee" />
        <stop offset=".5" stopColor="#f08cf2" />
        <stop offset="1" stopColor="#c768f6" />
      </linearGradient>
      <pattern id="thread" width="14" height="60" patternUnits="userSpaceOnUse" patternTransform="rotate(-10)">
        <rect width="14" height="60" fill="#1c1c1a" />
        <path d="M2 60L12 0" stroke="#b9b9a8" strokeWidth="3" />
      </pattern>
    </defs>

    <g transform="translate(850 440) scale(.33333)" stroke="#12081f" strokeWidth="3" strokeLinejoin="round">
      {/* screw rod and end knob */}
      <path d="M580 146L1486 -24v34L590 178z" fill="#fff" />
      <path d="M588 174L1486 4v38L604 212z" fill="url(#thread)" stroke="none" />
      <g fill="#fafafa">
        <path d="M1484 -34l76-20 14-12 18 90-14 6-82 12z" />
        <path d="M1488 -34l14 74M1500 -36l14 76M1546 -48l14 76" strokeWidth="5" />
        <path d="M1570 -88h12l34 142-4 8h-14z" strokeWidth="4" />
        <path d="M1576 -88l30 148" />
      </g>

      {/* tube */}
      <path d="M-1440 416L8 142l68 273-1516 271z" fill="url(#tube)" stroke="none" />
      <path d="M8 142l28-5 62-10L152 398 76 416z" fill="#f2f2f2" />
      <path d="M32 137l68-11 40 278-60 9z" fill="#050505" />
      <path d="M98 132l46 268" stroke="#d8d8d8" strokeWidth="5" />
      <path d="M10 142l56 272" strokeWidth="5" />

      {/* housing seen behind */}
      <path d="M105 135l50-14 15-20L480 45q24-4 45 14 30 26 60 78l30 70-510-56z" fill="#5c50b4" />
      <path d="M565 135l12-3 6 24-8 4z" fill="#c5d0f2" />
      <path d="M625 220l10-20 320-64q80-12 110 34l-60 50z" fill="#6659d8" />

      {/* main body */}
      <path
        d="M105 137l48-9 20-14L484 56q20 0 36 28l64 110 46 24 360-60q50-8 76 14l18 72 9 42-4 34-43 24-10 26-165 38q-100 24-146 60-30 20-40 52l14 130-205 12q-20-90-150-107l-30 0-50-44q-44-70-50-115l-14-14-60 10z"
        fill="#ae5afa"
      />
      <path d="M105 137l48-9 20-14L484 56q14 60 40 110 34 60 80 92l30 30-365 58-85 6-34 40-8 4z" fill="url(#barrel)" stroke="none" />
      <path d="M640 214l350-56q50-8 76 14l18 72 9 42-4 34-43 24-10 26-165 38-200 0-31-140z" fill="url(#rear)" stroke="none" />

      <path d="M172 104L480 48" />
      <circle cx="655" cy="394" r="14" fill="#e4dcf0" strokeWidth="6" />
      <path d="M648 388h10v12h8" fill="none" strokeWidth="5" />
      <path d="M379 156l5 9 6-9" fill="none" />
      <path d="M706 184l26 20" stroke="#7fc0e8" />

      {/* grip, trigger and battery */}
      <g transform="translate(270 480)">
        <path d="M310 490l6-20 30-10v60zM534 430l60-8 8 80-60-10z" fill="#4d45a5" />
        <path
          d="M600 432l40-2q40 6 56 50l19 90 13 80-10 50q-10 16-38 22l-260 50h-50q-26-6-34-38l-14-80z"
          fill="#656565"
        />
        <path
          d="M40 56q100-34 200-30h160l15 64q14 80 46 142 38 90 46 158 12 50 54 66l6 30q-60 34-160 36-60 4-95-22 28-10 30-44 8-40-14-86-40-70-66-138l-48-26-4-20q-16-90-60-94-30-18-96-16z"
          fill="url(#grip)"
          stroke="none"
        />
        <path d="M415 34v56q14 80 46 142 38 90 46 158 12 50 54 66M210 202l52 26q26 70 68 142 22 46 14 86-2 34-30 44" fill="none" />
        <path d="M75 76q44 4 50 44l2 62q8 12 23 14l62-14q-6-72-52-94-30-16-85-12z" fill="#d9d9d9" />
        <path d="M90 80q46 10 50 50l2 52 8 12M142 182l70-8" fill="none" strokeWidth="2" />
        <path d="M312 500q100 50 250-16l38 20 6 60-12 52q-4 8-14 10l-195 36-60-6-12-96z" fill="#a657fa" />
        <path d="M324 560l18-18 222-34 36 20 2 34-222 42z" fill="url(#base)" stroke="none" />
        <path d="M324 560l56 44 220-40M330 564q100 0 230-56l40 24M312 500q60 40 130 34 80-8 122-50M320 530q120 0 242-34M384 606l8 54M340 576v80M380 604l40 166M322 560v90" fill="none" />
        <path d="M322 654l66 8 195-36M326 706l66 2 325-54M602 430l4 134-16 60" fill="none" strokeWidth="5" />
        <path d="M338 662q4 90 40 108M352 764l60-2 260-48 46-18M606 564q60-16 72 30l22 60 10 44M610 532q60-14 90 26M640 430l-6 130" fill="none" />
        <path d="M420 772l256-46v-14M382 664l20 104" fill="none" />
        <path d="M620 448l4 48 30 6 40 30-10-50q-20-30-60-34z" fill="#1b1b1b" />
        <path d="M632 460l20 6 8 26M660 462l20 30" stroke="#777" strokeWidth="5" fill="none" />
        <path
          d="M258 0l-8 60q0 26 40 56 60 50 84 104 24 60 64 180 10 32 34 26 44-4 36-36M268 0l-6 60q6 24 46 60 50 40 72 90l66 180q14 34 34 24M222 30q14 40 18 76M190 120q140 0 226-44M300 210q90 0 140-80M368 212q50-2 68-30M310 180l110-80M266 232q28-12 42 10l84 180q12 34-16 34h-30M278 244l72 160M432 190q20 90 50 150l22 60M410 30l-40 60"
          fill="none"
          strokeWidth="3"
        />
        <path d="M372 -16l30 90M386 -16l30 90" fill="none" strokeWidth="5" />
        <circle cx="274" cy="168" r="42" fill="#a352ea" strokeWidth="3" />
        <path d="M256 130q20-10 34 2" stroke="#ef9be0" strokeWidth="6" fill="none" />
        <circle cx="276" cy="168" r="28" fill="#dcdcdc" strokeWidth="6" />
        <circle cx="516" cy="356" r="4" fill="#a9cc9a" />
      </g>

      {/* body edges, drawn over the grip */}
      <g fill="none">
        <path d="M152 122q14 150 42 230l24 36M172 114q14 130 34 236M180 304l390-70 30-6M188 352l80-8 330-68M206 350l62-14 320-60M264 344l40 200 16 14M274 344l40 188M292 486l250-20 110-10M304 536q130-40 240-28h140M304 530q90-22 180-24M200 388l24 4q8 50 54 84l20 12M490 508l24 80M494 508l18 40" />
        <path d="M484 46q0 40 20 86 26 60 96 124M496 46q6 60 40 110 30 44 86 92M504 60q40 64 110 136l6 50" strokeWidth="4" />
        <path d="M106 134l48-12M173 114L484 56" strokeWidth="5" />
        <path d="M600 256q8 30 40 32l310-56 130-28M622 262l10 8 320-58 80-14q30-8 34-30M640 214l350-56 40 0M598 290l360-64 60-14" />
        <path d="M625 200v64M638 192l2 74" strokeWidth="5" />
        <path d="M634 292l18 164M758 246l38 182M948 208l14 180M990 198l20 166" />
        <path d="M554 322l196-26q12 0 12 12v18L564 376q-10 0-12-12l-8-30q0-10 10-12z" />
        <path d="M660 412l210-40q14-4 24 14l54-12 6 14M666 402l200-36q20-4 28 12l50-12M650 408v54M664 410v52M660 456l130-32 90-20" />
        <path d="M528 480l10-20 112-6M536 480l8-14h110" strokeWidth="4" />
      </g>
      <g fill="none" stroke="#150722" strokeWidth="8">
        <path d="M800 280l96-16 62 74M804 300l80-14 52 58M808 320l64-12 42 44" />
      </g>
      <path d="M1038 240l16 94 16-2-18-92z" fill="#0d0d0d" />
      <path d="M1044 244l8 50" stroke="#fff" strokeWidth="6" />
    </g>

    {/* spin center */}
    <g transform="translate(850 440) scale(.33333)" strokeWidth="4">
      <path d="M66 592L52 536" stroke="#8fe08a" />
      <path d="M66 592l66-12" stroke="#c04048" />
      <path d="M66 592v28" stroke="#b8f4f4" />
      <circle cx="51" cy="534" r="8" fill="#55d650" />
      <circle cx="132" cy="580" r="7" fill="#b02a34" />
      <circle cx="66" cy="622" r="9" fill="#66e8ee" />
    </g>

    {/* mouse pointer */}
    <path d="M998 548v17l4-4 3 7 3-1-3-7h6z" fill="#fff" stroke="#555" strokeWidth=".7" />
  </svg>
);

const Viewport = () => (
  <main className="relative flex min-w-0 flex-1 items-start justify-center overflow-hidden bg-[#2e3535]">
    <Gun />
    <ViewToolbar />
  </main>
);

/* ---------- status bar ---------- */

const StatusBar = () => (
  <footer className="flex h-[47px] shrink-0 items-center border-t border-[#7e8a8a] bg-[#eceef0] pr-[2px] pl-[7px] text-[#44484a]">
    <div className="flex items-center pt-1">
      <button type="button" aria-label="导航器" className="flex h-[30px] w-[26px] items-center justify-center border border-[#8d9294] bg-[#c9cbcc]">
        <Icon>
          <path d="M1 1h18v17H1z" fill="#fff" stroke="#6b6f70" strokeWidth="1.500" />
          <path d="M1 5h6v13H1z" fill="#9fe6f7" stroke="#3a8dab" />
          <ellipse cx="14" cy="16" rx="5" ry="3" fill="#fff" stroke="#33373a" strokeWidth="1.500" />
          <circle cx="14" cy="16" r="1.500" fill="#33373a" />
        </Icon>
      </button>
      <button type="button" aria-label="浏览器" className="flex w-[34px] justify-center">
        <Icon>
          <circle cx="10" cy="11" r="7.500" fill="#3f9fcb" />
          <path d="M5 7l5-1 2 3-4 3-3-1zM11 13l4-1-1 4-4 1z" fill="#d2f1fb" />
          <ellipse cx="10" cy="10" rx="11" ry="4" transform="rotate(-45 10 10)" stroke="#7b8f98" strokeWidth="1.300" />
        </Icon>
      </button>
      <button type="button" aria-label="全屏" className="ml-[3px] h-5 w-5 border border-[#5d8799] bg-gradient-to-br from-white to-[#c5ecf5]" />
      <span className="ml-3 h-[30px] border-l border-[#8d9294]" />
    </div>
    <p className="mb-[10px] ml-[7px] flex items-center gap-[10px] text-[13px] leading-5">
      <span className="h-[6px] w-[6px] rounded-full bg-[#226079]" />
      将显示带边着色的模型
    </p>
    <div className="ml-auto flex items-center">
      <span className="h-[37px] border-l border-[#8d9294]" />
      <button type="button" aria-label="重新生成状态" className="flex w-7 justify-center">
        <Icon>
          <path d="M1 12l3-2h6v6l-3 3H1z" fill="#eefbfe" stroke="#3a8dab" strokeWidth="1.300" />
          <path d="M8 7c0-2 1-3 4-3M18 4c0 3-2 4-5 4" stroke="#226079" strokeWidth="2" />
          <path d="M12 1l4 3-4 3zM14 5l-4 3 4 3zM6 6h5l-3 4zM15 4l3-4 2 4z" fill="#226079" />
        </Icon>
      </button>
      <span className="h-[37px] border-l border-[#8d9294]" />
      <div className="mb-1 ml-[3px] flex h-[30px] border border-[#b2b6b8] bg-[#f4f5f6]">
        <button type="button" aria-label="查找" className="flex w-[32px] items-center justify-center border-r border-[#b2b6b8]">
          <Icon>
            <path d="M4 1h5v4l1 4v8H1l2-12zM11 1h5v4l3 12h-9V9l1-4z" fill="#55585a" />
            <path d="M5 2v14M13 2v14" stroke="#9b9fa1" strokeWidth="1.500" />
            <path d="M1 17h7M12 17h7" stroke="#1d1f20" strokeWidth="3" />
          </Icon>
        </button>
        <button type="button" aria-label="查找选项" className="flex w-[17px] items-center justify-center"><Caret /></button>
      </div>
      <span className="ml-[2px] h-[37px] border-l border-[#8d9294]" />
      <button type="button" aria-label="选择缓冲区" className="ml-[2px] flex h-9 w-[49px] items-center justify-center border border-[#9b9fa1] bg-[#f4f5f6]">
        <Icon size={24} box={24}>
          <path d="M1 6l6-5h16v16l-6 6H1zM1 6h16v17M17 6l6-5" stroke="#4a4d4f" strokeWidth="1.500" />
          <path d="M5 10l2-2h7v9l-2 2H5z" fill="#f5d894" stroke="#c29b4a" />
          <path d="M8 9h6v6H8z" fill="#a6ebfa" stroke="#3a8dab" />
        </Icon>
      </button>
      <div className="relative ml-[119px] flex h-7 w-[218px] border border-[#a9acae] bg-[#f4f5f6]">
        <select aria-label="选择过滤器" defaultValue="geometry" className="w-full appearance-none px-2 text-[15px] outline-none">
          <option value="geometry">几何</option>
        </select>
        <span className="pointer-events-none absolute inset-y-0 right-0 flex w-[19px] items-center justify-center border-l border-[#a9acae]">
          <Caret />
        </span>
      </div>
      <svg width="16" height="14" viewBox="0 0 16 14" stroke="#b8bbbd" strokeWidth="2" className="mt-6 ml-[2px]" aria-hidden="true">
        <path d="M2 14L15 1M7 14l8-8M12 14l3-3" />
      </svg>
    </div>
  </footer>
);

/* ---------- taskbar ---------- */

const TaskButton = ({ label, state, children }: { label: string; state?: 'running' | 'active'; children: React.ReactNode }) => (
  <button
    type="button"
    aria-label={label}
    className="flex h-[59px] w-[55px] shrink-0 items-center justify-center"
  >
    <span className={`flex h-[50px] w-[47px] flex-col items-center rounded-md ${state === 'active' ? 'border border-[#2d2d2d] bg-[#272727]' : 'border border-transparent'}`}>
      <span className="flex h-[43px] items-center pt-[3px]">{children}</span>
      {state === 'running' && <span className="h-1 w-[7px] rounded-full bg-[#8d8d8d]" />}
      {state === 'active' && <span className="h-1 w-[19px] rounded-full bg-[#d07a70]" />}
    </span>
  </button>
);

const CreoTaskIcon = () => (
  <Icon size={30} box={30}>
    <path d="M0 0h30v30H0z" fill="#fff" />
    <path d="M4 4h7v17h15v5H4z" fill="#d9d9d6" stroke="#8e8e8a" />
    <path d="M11 4h15v15H11z" fill="#1795c4" stroke="#106c90" />
  </Icon>
);

const Taskbar = () => (
  <div className="flex h-[59px] shrink-0 items-center bg-[#1b1b1b] pl-[462px] text-[#f2f2f2]">
    <TaskButton label="开始">
      <Icon size={30} box={30}>
        <defs>
          <linearGradient id="win" x1="0" y1="0" x2="1" y2="1">
            <stop offset="0" stopColor="#7ee0fb" />
            <stop offset="1" stopColor="#1f98ee" />
          </linearGradient>
        </defs>
        <path d="M1 1h13v13H1zM16 1h13v13H16zM1 16h13v13H1zM16 16h13v13H16z" fill="url(#win)" />
      </Icon>
    </TaskButton>
    <label className="ml-[5px] flex h-10 w-[275px] shrink-0 items-center gap-3 rounded-full border border-[#4d4d4d] bg-[#393939] px-[14px]">
      <Search size={19} color="#dcdcdc" />
      <input type="text" aria-label="搜索" placeholder="搜索" className="min-w-0 flex-1 text-[18px] outline-none placeholder:text-[#cfcfcf]" />
    </label>
    <span className="w-[2px]" />
    <TaskButton label="任务视图">
      <Icon size={30} box={30}>
        <path d="M9 1h20v19H9z" fill="#f1f1f1" />
        <path d="M1 8h20v20H1z" fill="#8d8d8d" opacity=".85" />
      </Icon>
    </TaskButton>
    <TaskButton label="NX">
      <svg width="30" height="30" viewBox="0 0 30 30" aria-hidden="true">
        <path d="M0 7h5v18h21v5H0z" fill="#2d8a80" />
        <path d="M4 0h26v26H4z" fill="#7d0d12" />
        <text x="15" y="21" textAnchor="middle" fill="#fff" fontSize="13" fontWeight="700" fontFamily="Roboto, sans-serif">NX</text>
      </svg>
    </TaskButton>
    <TaskButton label="文件资源管理器">
      <Icon size={30} box={30}>
        <path d="M0 3q0-2 2-2h8l3 4h15q2 0 2 2v20q0 2-2 2H0z" fill="#e0a21b" />
        <path d="M0 9h11l3-3h16v21q0 2-2 2H2q-2 0-2-2z" fill="#fccf45" />
        <path d="M5 29v-6q0-2 2-2h16q2 0 2 2v6z" fill="#1f6fae" />
        <path d="M9 25h12" stroke="#5cb4e6" strokeWidth="2" />
      </Icon>
    </TaskButton>
    <TaskButton label="截图工具">
      <Icon size={30} box={30}>
        <rect x="0" y="0" width="22" height="22" rx="4" fill="#f3f3f3" />
        <path d="M4 4h14v14H4z" stroke="#c33a36" strokeWidth="2.500" strokeDasharray="3 2" />
        <path d="M16 12l2 13M13 17l12-3" stroke="#a9b7c0" strokeWidth="2" />
        <circle cx="17" cy="27" r="2.500" stroke="#3aa5dd" strokeWidth="1.800" />
        <circle cx="27" cy="16" r="2.500" stroke="#3aa5dd" strokeWidth="1.800" />
      </Icon>
    </TaskButton>
    <TaskButton label="Edge">
      <Icon size={30} box={30}>
        <defs>
          <linearGradient id="edge" x1="0" y1="0" x2="1" y2=".4">
            <stop offset="0" stopColor="#28b0e8" />
            <stop offset="1" stopColor="#5fdc62" />
          </linearGradient>
        </defs>
        <circle cx="15" cy="15" r="15" fill="#1370c4" />
        <path d="M0 14C1 5 8 0 15 0c9 0 15 6 15 13 0 5-4 8-9 8-3 0-4-2-2-4 2-4-2-8-7-8C6 9 1 11 0 14z" fill="url(#edge)" />
        <path d="M11 13c-3 5-1 13 6 15 5 1 9-2 11-5-6 3-15 0-14-7z" fill="#0d4a94" />
      </Icon>
    </TaskButton>
    <TaskButton label="WPS">
      <Icon size={30} box={30}>
        <path d="M3 6l7 18 5-13 5 13 7-18H16" stroke="#d92b20" strokeWidth="4" strokeLinejoin="bevel" />
      </Icon>
    </TaskButton>
    <TaskButton label="BYD">
      <svg width="30" height="20" viewBox="0 0 30 20" aria-hidden="true">
        <path d="M0 0h30v20H0z" fill="#fff" />
        <ellipse cx="15" cy="10" rx="13.500" ry="8" fill="none" stroke="#c9252c" strokeWidth="2" />
        <text x="15" y="14" textAnchor="middle" fill="#c9252c" fontSize="10" fontWeight="700" fontFamily="Roboto, sans-serif">BYD</text>
      </svg>
    </TaskButton>
    <TaskButton label="录屏" state="running">
      <Icon size={30} box={30}>
        <rect width="30" height="30" rx="6" fill="#d9558f" />
        <path d="M3 5l8 3 4-5 5 5 8-4-2 12H5z" fill="#8bd5ee" />
        <path d="M8 12q7-4 14 0l1 12q-8 5-16 0z" fill="#f3f0f6" />
        <circle cx="15" cy="19" r="6" fill="#2f69b3" />
        <circle cx="15" cy="19" r="3" fill="#bfe7f7" />
      </Icon>
    </TaskButton>
    <TaskButton label="AI" state="running">
      <Icon size={30} box={30}>
        <defs>
          <linearGradient id="ai" x1="0" y1="0" x2="1" y2="1">
            <stop offset="0" stopColor="#4c4dfb" />
            <stop offset="1" stopColor="#d355d8" />
          </linearGradient>
        </defs>
        <path d="M0 27L9 11q2-3 4 0l9 16h-6l-5-9-5 9z" fill="url(#ai)" />
        <path d="M18 13q4-5 6 0l6 14h-7l-5-10z" fill="#a94be8" />
        <circle cx="19" cy="6" r="4" fill="#ef8c6a" />
      </Icon>
    </TaskButton>
    <TaskButton label="Creo" state="active"><CreoTaskIcon /></TaskButton>
    <TaskButton label="Creo" state="running"><CreoTaskIcon /></TaskButton>

    <div className="ml-auto flex items-center pr-6">
      <button type="button" aria-label="显示隐藏的图标" className="flex w-10 justify-center"><ChevronUp size={20} /></button>
      <button type="button" aria-label="电脑管家" className="flex w-10 justify-center">
        <Icon>
          <path d="M10 1l8 3c0 8-2 12-8 15C4 16 2 12 2 4z" fill="#fff" stroke="#2448c8" strokeWidth="2" />
          <path d="M5 6l5 4 5-4M6 10l4 4 4-4" stroke="#2448c8" strokeWidth="1.800" />
        </Icon>
      </button>
      <button type="button" aria-label="微信" className="flex w-10 justify-center">
        <Icon>
          <ellipse cx="8" cy="8" rx="8" ry="6.500" fill="#4fd367" />
          <ellipse cx="14" cy="13" rx="6" ry="5" fill="#e6e6e6" />
          <path d="M5 6h1M10 6h1" stroke="#1d6a2c" strokeWidth="1.500" />
          <path d="M12 12h1M16 12h1" stroke="#777" strokeWidth="1.300" />
        </Icon>
      </button>
      <button type="button" aria-label="网易云音乐" className="flex w-10 justify-center">
        <Icon>
          <rect width="20" height="20" rx="4" fill="#c41016" />
          <path d="M13 3c-3-1-3 1-2 5l1 3a2 2 0 1 1-3-1c1-2 6-2 6 2 0 6-10 6-10 0 0-3 2-5 4-6" stroke="#fff" strokeWidth="1.500" />
        </Icon>
      </button>
      <button type="button" aria-label="麦克风" className="flex w-10 justify-center"><Mic size={20} color="#d09a84" /></button>
      <button type="button" className="w-[38px] text-[18px]">英</button>
      <button type="button" aria-label="网络、音量、电池" className="flex w-[104px] items-center justify-center gap-[10px]">
        <Wifi size={20} />
        <Volume2 size={20} />
        <Icon>
          <path d="M6 5h11v10H3V10M17 8h2v4h-2" stroke="#fff" strokeWidth="1.800" />
          <path d="M7 8h6v5H5z" fill="#fff" />
          <path d="M4 1L1 6h4L3 10" stroke="#fff" strokeWidth="1.500" />
        </Icon>
      </button>
      <button type="button" className="w-[78px] text-right text-[15px] leading-5">
        20:25
        <br />
        2025/5/19
      </button>
    </div>
  </div>
);

export default function App() {
  return (
    <div className="flex h-screen flex-col overflow-hidden bg-[#565357] font-['Noto_Sans','Noto_Sans_CJK_SC',sans-serif]">
      <div className="flex min-h-0 flex-1 flex-col border-[6px] border-b-[7px] border-[#565357]">
        <TitleBar />
        <Tabs />
        <Ribbon />
        <div className="flex min-h-0 flex-1">
          <Sidebar />
          <Viewport />
        </div>
        <StatusBar />
      </div>
      <Taskbar />
    </div>
  );
}
